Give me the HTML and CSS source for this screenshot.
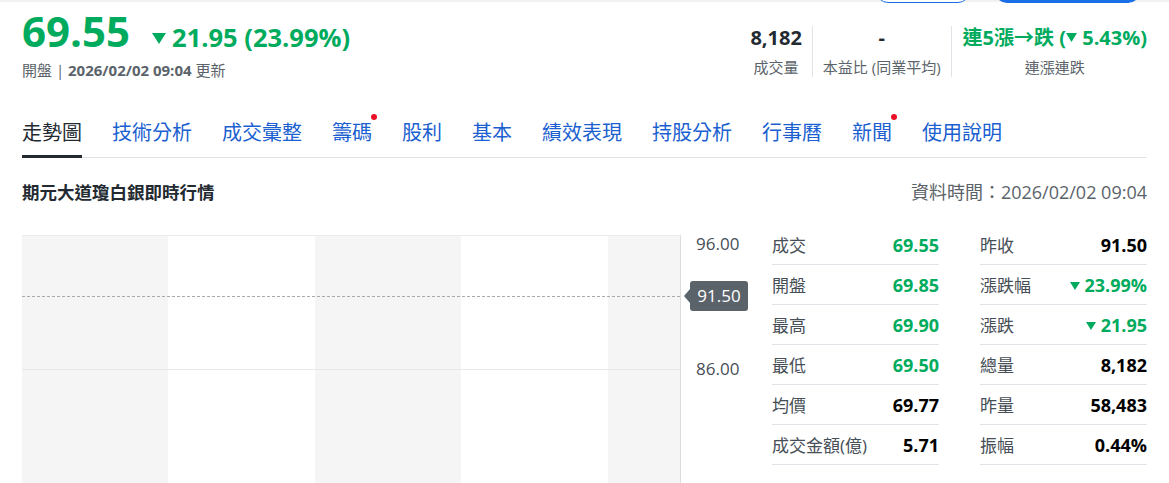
FILE: index.html
```html
<!DOCTYPE html>
<html lang="zh-Hant">
<head>
<meta charset="utf-8">
<title>期元大道瓊白銀即時行情</title>
<link rel="stylesheet" href="styles.css">
</head>
<body>
<div class="topbar">
  <span class="btn btn-outline"></span>
  <span class="btn btn-fill"></span>
</div>

<header class="quote">
  <div class="quote-main">
    <div class="price-line">
      <span class="price">69.55</span>
      <span class="change"><svg class="tri tri-lg" viewBox="0 0 14 11"><path d="M0 0H14L7 11Z"/></svg>21.95 (23.99%)</span>
    </div>
    <div class="status">開盤 | <b>2026/02/02 09:04</b> 更新</div>
  </div>
  <ul class="summary">
    <li><span class="val">8,182</span><span class="lbl">成交量</span></li>
    <li><span class="val">-</span><span class="lbl">本益比 (同業平均)</span></li>
    <li><span class="val up">連5漲→跌 (<svg class="tri tri-md" viewBox="0 0 10 8"><path d="M0 0H10L5 8Z"/></svg> 5.43%)</span><span class="lbl">連漲連跌</span></li>
  </ul>
</header>

<nav>
  <ul class="tabs">
    <li class="active">走勢圖</li>
    <li>技術分析</li>
    <li>成交彙整</li>
    <li class="dot">籌碼</li>
    <li>股利</li>
    <li>基本</li>
    <li>績效表現</li>
    <li>持股分析</li>
    <li>行事曆</li>
    <li class="dot">新聞</li>
    <li>使用說明</li>
  </ul>
</nav>

<div class="section-head">
  <h2 class="title">期元大道瓊白銀即時行情</h2>
  <span class="updated">資料時間：2026/02/02 09:04</span>
</div>

<section class="board">
  <div class="chart">
    <div class="plot">
      <div class="col shade"></div>
      <div class="col"></div>
      <div class="col shade"></div>
      <div class="col"></div>
      <div class="col shade"></div>
      <div class="hline"></div>
      <div class="ref-line"></div>
    </div>
    <div class="axis">
      <span class="tick tick-96">96.00</span>
      <span class="tick tick-86">86.00</span>
      <span class="ref-tag">91.50</span>
    </div>
  </div>
  <div class="stats">
    <div class="stat-col">
      <div class="row"><span class="k">成交</span><span class="v down">69.55</span></div>
      <div class="row"><span class="k">開盤</span><span class="v down">69.85</span></div>
      <div class="row"><span class="k">最高</span><span class="v down">69.90</span></div>
      <div class="row"><span class="k">最低</span><span class="v down">69.50</span></div>
      <div class="row"><span class="k">均價</span><span class="v">69.77</span></div>
      <div class="row"><span class="k">成交金額(億)</span><span class="v">5.71</span></div>
    </div>
    <div class="stat-col">
      <div class="row"><span class="k">昨收</span><span class="v">91.50</span></div>
      <div class="row"><span class="k">漲跌幅</span><span class="v down"><svg class="tri tri-sm" viewBox="0 0 10 8"><path d="M0 0H10L5 8Z"/></svg> 23.99%</span></div>
      <div class="row"><span class="k">漲跌</span><span class="v down"><svg class="tri tri-sm" viewBox="0 0 10 8"><path d="M0 0H10L5 8Z"/></svg> 21.95</span></div>
      <div class="row"><span class="k">總量</span><span class="v">8,182</span></div>
      <div class="row"><span class="k">昨量</span><span class="v">58,483</span></div>
      <div class="row"><span class="k">振幅</span><span class="v">0.44%</span></div>
    </div>
  </div>
</section>
</body>
</html>
```

FILE: styles.css
```css
* {
  box-sizing: border-box;
  margin: 0;
  padding: 0;
}

html, body {
  background: #fff;
}

body {
  width: 1169px;
  height: 483px;
  overflow: hidden;
  font-family: "Open Sans", "Noto Sans CJK TC", sans-serif;
  color: #232a31;
}

/* top action bar (mostly scrolled off) */
.topbar {
  height: 2px;
  display: flex;
  justify-content: flex-end;
  align-items: flex-start;
  gap: 25px;
  padding-right: 29px;
  background: #f1f1f1;
}

.btn {
  flex: none;
  height: 30px;
  margin-top: -27px;
  border-radius: 12px;
}

.btn-outline {
  width: 94px;
  border: 1.5px solid #1a6ee8;
  background: #fff;
}

.btn-fill {
  width: 145px;
  background: #1a6ee8;
}

/* quote header */
.quote {
  display: flex;
  justify-content: space-between;
  align-items: flex-start;
  padding: 8px 22px 0;
}

.price-line {
  display: flex;
  align-items: baseline;
  gap: 22px;
}

.price {
  font-size: 42px;
  line-height: 42px;
  font-weight: 700;
  color: #00ab5e;
}

.change {
  font-size: 25.5px;
  font-weight: 700;
  color: #00ab5e;
}

.tri {
  display: inline-block;
  fill: currentColor;
}

.tri-lg {
  width: 14px;
  height: 11px;
  margin-right: 6px;
  vertical-align: 3px;
}

.tri-md {
  width: 11px;
  height: 9px;
  vertical-align: 3px;
}

.tri-sm {
  width: 10px;
  height: 8px;
  vertical-align: 2px;
}

.status {
  margin-top: 6px;
  font-size: 15px;
  line-height: 20px;
  color: #5b636a;
}

.status b {
  font-weight: 700;
}

.summary {
  list-style: none;
  display: flex;
  margin-top: 16px;
}

.summary li {
  display: flex;
  flex-direction: column;
  align-items: center;
  height: 51px;
  padding: 0 10px;
  border-left: 1px solid #e0e4e9;
}

.summary li:first-child {
  border-left: 0;
}

.summary li:last-child {
  padding: 0 0 0 11px;
}

.summary .val {
  font-size: 20px;
  line-height: 24px;
  font-weight: 700;
  color: #232a31;
}

.summary .val.up {
  color: #00ab5e;
}

.summary .lbl {
  margin-top: 7px;
  font-size: 15px;
  line-height: 20px;
  color: #5b636a;
}

/* tabs */
.tabs {
  list-style: none;
  display: flex;
  gap: 30px;
  margin: 39px 22px 0;
  border-bottom: 1px solid #e0e4e9;
}

.tabs li {
  position: relative;
  font-size: 20px;
  line-height: 28px;
  padding-bottom: 10px;
  color: #1b5fd0;
}

.tabs li.active {
  color: #232a31;
}

.tabs li.active::after {
  content: "";
  position: absolute;
  left: 0;
  right: 0;
  bottom: -1px;
  height: 3px;
  background: #232a31;
}

.tabs li.dot::before {
  content: "";
  position: absolute;
  top: -5px;
  right: -5px;
  width: 6px;
  height: 6px;
  border-radius: 50%;
  background: #eb0f29;
}

/* section heading */
.section-head {
  display: flex;
  justify-content: space-between;
  align-items: center;
  margin: 22px 22px 0;
  line-height: 24px;
}

.title {
  font-size: 17.5px;
  font-weight: 700;
  color: #232a31;
}

.updated {
  font-size: 18px;
  color: #5b636a;
}

/* board: chart + stats */
.board {
  display: flex;
  margin: 21px 22px 0;
}

.chart {
  display: flex;
  width: 738px;
  height: 260px;
  flex: none;
}

.plot {
  position: relative;
  display: grid;
  grid-template-columns: 146px 147px 146px 147px 1fr;
  width: 659px;
  margin-top: 10px;
  border-top: 1px solid #ebebeb;
  border-right: 1px solid #dcdcdc;
}

.col.shade {
  background: #f5f5f5;
}

.hline {
  position: absolute;
  left: 0;
  right: 0;
  top: 133px;
  height: 1px;
  background: #e8e8e8;
}

.ref-line {
  position: absolute;
  left: 0;
  right: 0;
  top: 60px;
  border-top: 1px dashed #a9a9a9;
}

.axis {
  position: relative;
  flex: 1;
}

.tick {
  position: absolute;
  left: 15px;
  font-size: 17px;
  line-height: 24px;
  color: #464e56;
}

.tick-96 {
  top: 7px;
}

.tick-86 {
  top: 132px;
}

.ref-tag {
  position: absolute;
  left: 9px;
  top: 56px;
  width: 58px;
  height: 30px;
  border-radius: 3px;
  background: #5b636a;
  color: #fff;
  font-size: 17px;
  line-height: 30px;
  text-align: center;
}

.ref-tag::before {
  content: "";
  position: absolute;
  left: -6px;
  top: 8px;
  border-style: solid;
  border-width: 7px 6px 7px 0;
  border-color: transparent #5b636a transparent transparent;
}

.stats {
  display: grid;
  grid-template-columns: 167px 167px;
  column-gap: 41px;
  margin-left: 12px;
}

.row {
  display: flex;
  justify-content: space-between;
  align-items: center;
  height: 40px;
  border-bottom: 1px solid #e0e4e9;
}

.k {
  font-size: 17px;
  color: #464e56;
}

.v {
  font-size: 18px;
  font-weight: 700;
  color: #000;
}

.v.down {
  color: #00ab5e;
}
```
